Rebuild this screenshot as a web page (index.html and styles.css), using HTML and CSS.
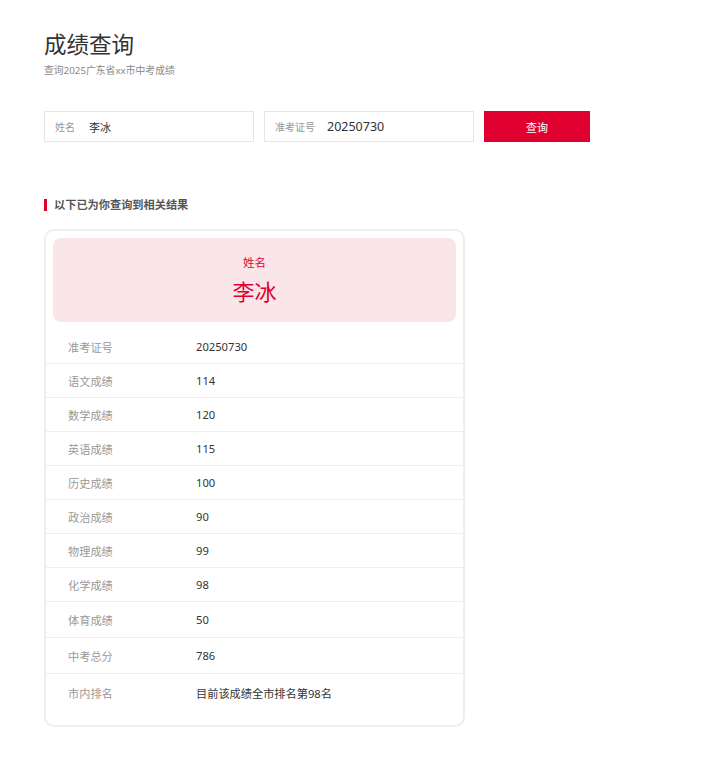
FILE: index.html
```html
<!DOCTYPE html>
<html lang="zh-CN">
<head>
    <meta charset="utf-8" />
    <title>成绩查询</title>
    <link rel="stylesheet" href="styles.css">
</head>
<body>
    <div class="wrap">
        <div class="title">
            <div class="main">成绩查询</div>
            <div class="sub">查询2025广东省xx市中考成绩</div>
        </div>
        <form class="search">
            <label class="field f1">
                <span class="lbl">姓名</span>
                <input type="text" name="name" value="李冰" />
            </label>
            <label class="field f2">
                <span class="lbl">准考证号</span>
                <input type="text" name="no" value="20250730" />
            </label>
            <button type="button" class="btn btn-primary">查询</button>
        </form>
        <div class="sect">以下已为你查询到相关结果</div>
        <div class="card">
            <div class="head">
                <div class="t">姓名</div>
                <div class="h">李冰</div>
            </div>
            <div class="rows">
                <div class="row"><span class="k">准考证号</span><span class="v">20250730</span></div>
                <div class="row"><span class="k">语文成绩</span><span class="v">114</span></div>
                <div class="row"><span class="k">数学成绩</span><span class="v">120</span></div>
                <div class="row"><span class="k">英语成绩</span><span class="v">115</span></div>
                <div class="row"><span class="k">历史成绩</span><span class="v">100</span></div>
                <div class="row"><span class="k">政治成绩</span><span class="v">90</span></div>
                <div class="row"><span class="k">物理成绩</span><span class="v">99</span></div>
                <div class="row"><span class="k">化学成绩</span><span class="v">98</span></div>
                <div class="row tall"><span class="k">体育成绩</span><span class="v">50</span></div>
                <div class="row tall"><span class="k">中考总分</span><span class="v">786</span></div>
                <div class="row tall last"><span class="k">市内排名</span><span class="v">目前该成绩全市排名第98名</span></div>
            </div>
        </div>
    </div>
</body>
</html>
```

FILE: styles.css
```css
body { margin: 0; font-family: "Noto Sans", "Noto Sans CJK SC", sans-serif; font-size: 11.2px; color: #333; background: #fff; }
.wrap { padding: 28px 44px 40px; }
.title .main { font-size: 22.5px; line-height: 34px; color: #333; }
.title .sub { font-size: 9.8px; line-height: 16px; color: #888; margin-top: 1px; }
.search { display: flex; gap: 10px; margin-top: 32px; }
.field { display: flex; align-items: center; width: 210px; height: 31px; box-sizing: border-box; border: 1px solid #e6e6e6; padding: 0 10px; }
.field .lbl { font-size: 10px; color: #999; flex: none; }
.field input { border: none; outline: none; font-family: inherit; color: #333; min-width: 0; flex: 1; padding: 0; background: transparent; }
.f1 .lbl { width: 34px; }
.f1 input { font-size: 11px; }
.f2 .lbl { width: 52px; }
.f2 input { font-size: 12.5px; }
.btn { font-family: inherit; font-size: 11px; border: none; cursor: pointer; }
.btn-primary { width: 106px; height: 31px; background: #df0030; color: #fff; }
.sect { margin-top: 57px; padding-left: 7px; border-left: 3px solid #df0030; font-size: 11.2px; line-height: 12px; font-weight: bold; color: #555; }
.card { width: 421px; box-sizing: border-box; margin-top: 18px; border: 2px solid #eee; border-radius: 10px; padding: 7px 7px 13px; }
.head { background: #fae6e9; border-radius: 8px; height: 84px; text-align: center; color: #df0030; padding-top: 16px; box-sizing: border-box; }
.head .t { font-size: 11.5px; line-height: 18px; }
.head .h { font-size: 22px; line-height: 32px; margin-top: 3px; }
.rows { margin: 8px -7px 0; }
.row { display: flex; align-items: center; height: 34px; border-bottom: 1px solid #efefef; padding-left: 22px; box-sizing: border-box; }
.row.tall { height: 36px; }
.row.last { height: 38px; border-bottom: none; }
.row .k { width: 128px; color: #999; }
.row .v { color: #333; }
```
